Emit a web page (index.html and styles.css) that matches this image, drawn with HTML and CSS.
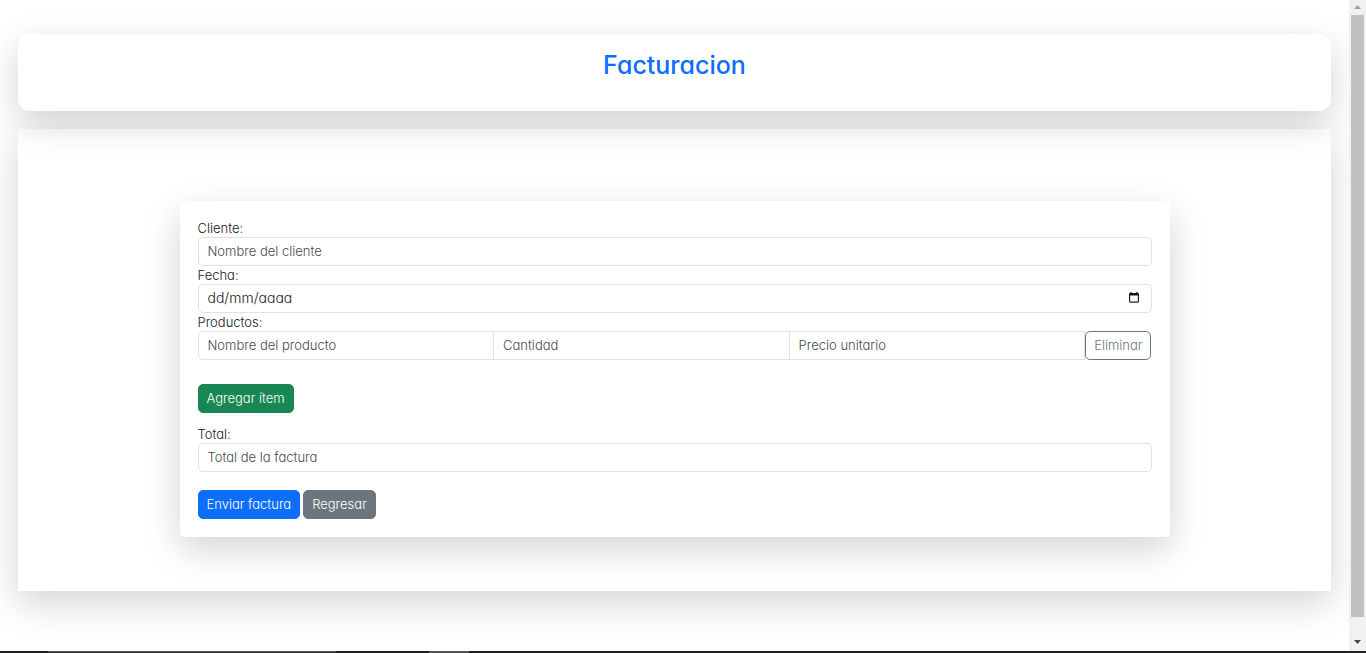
FILE: index.html
```html
<!DOCTYPE html>
<html lang="es">
<head>
<meta charset="utf-8">
<meta name="viewport" content="width=device-width, initial-scale=1">
<title>Facturacion</title>
<link rel="stylesheet" href="styles.css">
</head>
<body>
<div class="window">
  <div class="page">
    <header class="banner"><h1 class="title">Facturacion</h1></header>
    <main class="panel">
      <form class="card">
        <label class="label" for="cliente">Cliente:</label>
        <input class="field" id="cliente" type="text" placeholder="Nombre del cliente">
        <label class="label" for="fecha">Fecha:</label>
        <div class="field date">
          <input class="date-text" id="fecha" type="text" value="dd/mm/aaaa">
          <button class="date-button" type="button" aria-label="Abrir calendario">
            <svg width="10" height="11" viewBox="0 0 10 11" aria-hidden="true">
              <rect x="0.6" y="1.6" width="8.8" height="8.6" rx="1" fill="none" stroke="#222" stroke-width="1.2"/>
              <path d="M0.5 1.2h9v2.3h-9zM1.5 0h1.3v2H1.5zM7.2 0h1.3v2H7.2z" fill="#111"/>
            </svg>
          </button>
        </div>
        <label class="label" for="producto">Productos:</label>
        <div class="item">
          <input class="field item-field" id="producto" type="text" placeholder="Nombre del producto">
          <input class="field item-field" type="text" placeholder="Cantidad" aria-label="Cantidad">
          <input class="field item-field" type="text" placeholder="Precio unitario" aria-label="Precio unitario">
          <button class="button outline" type="button">Eliminar</button>
        </div>
        <button class="button success add" type="button">Agregar ítem</button>
        <label class="label" for="total">Total:</label>
        <input class="field" id="total" type="text" placeholder="Total de la factura">
        <div class="actions">
          <button class="button primary" type="submit">Enviar factura</button>
          <button class="button secondary" type="button">Regresar</button>
        </div>
      </form>
    </main>
  </div>
  <div class="scrollbar" aria-hidden="true">
    <svg class="arrow" width="17" height="15" viewBox="0 0 17 15"><path d="M5 9h7L8.500 5z" fill="#a0a0a0"/></svg>
    <div class="thumb"></div>
    <svg class="arrow" width="17" height="17" viewBox="0 0 17 17"><path d="M5 6h7L8.500 10z" fill="#484848"/></svg>
  </div>
</div>
<div class="taskbar" aria-hidden="true"><div class="search"></div><div class="task"></div></div>
</body>
</html>
```
FILE: styles.css
```css
* { box-sizing: border-box; }
body {
  margin: 0;
  height: 100vh;
  display: flex;
  flex-direction: column;
  overflow: hidden;
  background: #fff;
  color: #16191c;
  font: 300 13px/18px Inter, "Open Sans", sans-serif;
  font-feature-settings: "cv11";
}
input, button { font: inherit; font-feature-settings: inherit; color: inherit; }
.window { flex: 1; min-height: 0; display: flex; }
.page { flex: 1; min-width: 0; padding: 34px 18px 0; overflow: hidden; }
.banner, .panel, .card { box-shadow: 0 12px 36px rgba(0, 0, 0, .176); }
.banner { padding: 18px 18px 32px; border-radius: 12px; text-align: center; }
.title { margin: 0; font-size: 25px; line-height: 27px; font-weight: 500; color: #0d6efd; }
.panel { margin-top: 18px; padding: 72px 18px 54px; }
.card {
  display: flex;
  flex-direction: column;
  max-width: 990px;
  margin: 0 auto;
  padding: 18px;
  border-radius: 4px;
  background: #fff;
}
.label { align-self: flex-start; }
.field {
  width: 100%;
  min-width: 0;
  height: 29px;
  padding: 0 9px 2px;
  border: 1px solid #dee2e6;
  border-radius: 5px;
  background: #fff;
  outline: 0;
}
.field::placeholder { color: #484b4e; opacity: 1; }
.date { display: flex; align-items: center; padding-right: 12px; }
.date-text { flex: 1; min-width: 0; padding: 0; border: 0; outline: 0; background: none; font-size: 14px; }
.date-button { display: flex; padding: 0; border: 0; background: none; }
.item { display: flex; margin-bottom: 24px; }
.item-field { flex: 1; border-radius: 0; }
.item-field:first-child { border-radius: 5px 0 0 5px; }
.item-field + .item-field { border-left: 0; }
.button {
  height: 29px;
  padding: 0 8px 2px;
  border: 1px solid;
  border-radius: 5px;
  color: #fff;
  white-space: nowrap;
}
.outline { background: #fff; border-color: #6c757d; color: #6c757d; }
.success { background: #198754; border-color: #198754; }
.primary { background: #0d6efd; border-color: #0d6efd; }
.secondary { background: #6c757d; border-color: #6c757d; }
.add { align-self: flex-start; margin-bottom: 12px; }
.actions { display: flex; gap: 3px; margin-top: 18px; }
.scrollbar { width: 17px; display: flex; flex-direction: column; background: #f1f1f1; }
.thumb { flex: 1; margin: 0 2px 17px; background: #c1c1c1; }
.arrow { flex: none; }
.taskbar { display: flex; height: 2px; padding-left: 48px; background: #231f20; }
.search { width: 288px; border-top: 1px solid #555; background: #353132; }
.task { width: 40px; margin-left: 93px; background: #555253; }
```
